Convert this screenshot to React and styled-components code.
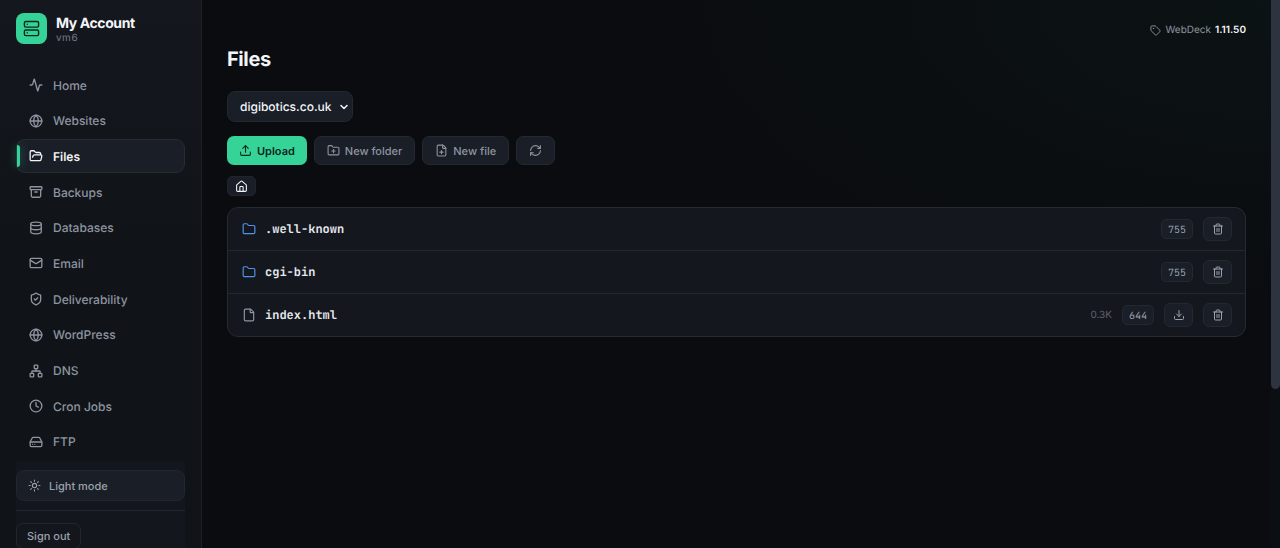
import React from 'react';
import styled, { createGlobalStyle } from 'styled-components';
import {
  Activity, Globe, FolderOpen, Archive, Database, Mail, ShieldCheck, Network, Clock,
  HardDrive, Sun, Upload, FolderPlus, FilePlus, RefreshCw, House, Folder, File,
  Trash2, Download, Tag, Server, ChevronDown,
} from 'lucide-react';

const GlobalStyle = createGlobalStyle`
  *, *::before, *::after { box-sizing: border-box; }
  body {
    margin: 0;
    background: #0a0c10;
    color: #f3f5f8;
    font-family: Inter, "Liberation Sans", sans-serif;
    font-size: 12px;
    text-rendering: geometricPrecision;
  }
  button, select { font: inherit; margin: 0; text-rendering: inherit; }
  button { cursor: pointer; }
  svg { flex: none; display: block; }
`;

const Page = styled.div`
  display: flex;
  height: 100vh;
  overflow: hidden;
  background: radial-gradient(ellipse 600px 300px at 100% 0, #0c1314, #0a0c10);
`;

const Sidebar = styled.aside`
  flex: none;
  display: flex;
  flex-direction: column;
  width: 202px;
  padding: 13px 16px 0;
  border-right: 1px solid #1d2127;
  background: linear-gradient(180deg, #14171e, #101418 50%);
`;

const Brand = styled.div`
  display: flex;
  align-items: center;
  gap: 9px;
  margin-bottom: 24px;
`;

const BrandMark = styled.span`
  display: grid;
  place-items: center;
  width: 31px;
  height: 31px;
  border-radius: 8px;
  background: #36d399;
  color: #08281c;
`;

const BrandName = styled.strong`
  display: block;
  font-size: 14px;
  line-height: 18px;
  font-weight: 700;
  letter-spacing: -0.4px;
`;

const BrandHost = styled.span`
  display: block;
  font-size: 10px;
  line-height: 10px;
  letter-spacing: 0.5px;
  color: #757b87;
`;

const Nav = styled.nav`
  flex: 1;
  display: flex;
  flex-direction: column;
  justify-content: space-between;
`;

const NavItem = styled.a`
  position: relative;
  display: flex;
  align-items: center;
  gap: 10px;
  height: 34px;
  padding: 0 12px;
  border: 1px solid ${(p) => (p.$active ? '#262b34' : 'transparent')};
  border-radius: 9px;
  background: ${(p) => (p.$active ? '#1a1e27' : 'transparent')};
  color: ${(p) => (p.$active ? '#f3f5f8' : '#8e94a0')};
  font-weight: ${(p) => (p.$active ? 600 : 500)};
  text-decoration: none;

  &::before {
    content: '';
    display: ${(p) => (p.$active ? 'block' : 'none')};
    position: absolute;
    left: 0;
    top: 5px;
    bottom: 5px;
    width: 3px;
    border-radius: 0 3px 3px 0;
    background: #36d399;
    box-shadow: 0 0 10px rgba(54, 211, 153, 0.5);
  }
`;

const SidebarFooter = styled.div`
  flex: none;
  height: 87px;
  margin-top: 2px;
  padding-top: 9px;
  background: #13161d;
`;

const ThemeButton = styled.button`
  display: flex;
  align-items: center;
  gap: 8px;
  width: 100%;
  height: 31px;
  padding: 0 11px;
  border: 1px solid #22262f;
  border-radius: 8px;
  background: #1a1e27;
  color: #9ba1ac;
  font-size: 11px;
  font-weight: 500;
`;

const Session = styled.div`
  margin-top: 9px;
  padding-top: 12px;
  border-top: 1px solid #22262d;
`;

const SignOut = styled.button`
  height: 26px;
  padding: 0 10px;
  border: 1px solid #22262f;
  border-radius: 7px;
  background: transparent;
  color: #9ba1ac;
  font-size: 11px;
  font-weight: 500;
`;

const Main = styled.main`
  flex: 1;
  min-width: 0;
  padding: 22px 34px 22px 25px;
`;

const Version = styled.div`
  display: flex;
  align-items: center;
  justify-content: flex-end;
  gap: 4px;
  height: 16px;
  font-size: 10px;
  color: #8e94a0;

  strong { color: #f3f5f8; font-weight: 600; }
`;

const Title = styled.h1`
  margin: 9px 0 20px;
  font-size: 20px;
  line-height: 24px;
  font-weight: 700;
  letter-spacing: -0.4px;
`;

const SelectBox = styled.div`
  display: grid;
  align-items: center;
  width: max-content;
  margin-bottom: 14px;

  & > * { grid-area: 1 / 1; }
  svg { justify-self: end; margin-right: 3px; pointer-events: none; }
`;

const SiteSelect = styled.select`
  appearance: none;
  height: 31px;
  padding: 0 20px 0 12px;
  border: 1px solid #232831;
  border-radius: 8px;
  background: #1a1e27;
  color: #f3f5f8;
  font-weight: 500;
`;

const Toolbar = styled.div`
  display: flex;
  gap: 7px;
  margin-bottom: 11px;
`;

const ToolButton = styled.button`
  display: flex;
  align-items: center;
  gap: 5px;
  height: 29px;
  padding: 0 12px;
  border: ${(p) => (p.$primary ? 'none' : '1px solid #232831')};
  border-radius: 7px;
  background: ${(p) => (p.$primary ? '#36d399' : '#1a1e27')};
  color: ${(p) => (p.$primary ? '#07271b' : '#8e94a0')};
  font-size: 11px;
  font-weight: ${(p) => (p.$primary ? 600 : 500)};
`;

const Crumb = styled.button`
  display: grid;
  place-items: center;
  width: 29px;
  height: 20px;
  margin-bottom: 11px;
  padding: 0;
  border: 1px solid #20242d;
  border-radius: 5px;
  background: #1a1e27;
  color: #f3f5f8;
`;

const FileList = styled.ul`
  margin: 0;
  padding: 0;
  list-style: none;
  border: 1px solid #262a31;
  border-radius: 11px;
  background: #14171e;
`;

const FileRow = styled.li`
  display: flex;
  align-items: center;
  gap: 10px;
  height: 42px;
  padding: 0 13px 0 14px;

  & + & { height: 43px; border-top: 1px solid #23272e; }
`;

const FileName = styled.a`
  flex: 1;
  display: flex;
  align-items: center;
  gap: 9px;
  color: #e6e9ee;
  font-family: "JetBrains Mono", "DejaVu Sans Mono", monospace;
  font-size: 12px;
  font-weight: 600;
  text-decoration: none;

  svg { color: ${(p) => (p.$folder ? '#4f93ea' : '#8e94a0')}; }
`;

const FileSize = styled.span`
  font-size: 10px;
  color: #5d636f;
`;

const Mode = styled.button`
  height: 20px;
  padding: 0 6px;
  border: 1px solid #232831;
  border-radius: 5px;
  background: #1a1e27;
  color: #9ba1ac;
  font-family: "JetBrains Mono", "DejaVu Sans Mono", monospace;
  font-size: 10px;
`;

const IconButton = styled.button`
  display: grid;
  place-items: center;
  width: 29px;
  height: 24px;
  padding: 0;
  border: 1px solid #232831;
  border-radius: 6px;
  background: #1a1e27;
  color: #9ba1ac;
`;

const ScrollTrack = styled.div`
  position: fixed;
  top: 0;
  right: 0;
  bottom: 0;
  width: 9px;
  background: #0b0e12;
`;

const ScrollThumb = styled.div`
  height: 71%;
  border-radius: 0 0 5px 5px;
  background: #2d333f;
`;

const NAV = [
  ['Home', Activity], ['Websites', Globe], ['Files', FolderOpen], ['Backups', Archive],
  ['Databases', Database], ['Email', Mail], ['Deliverability', ShieldCheck],
  ['WordPress', Globe], ['DNS', Network], ['Cron Jobs', Clock], ['FTP', HardDrive],
];

const FILES = [
  { name: '.well-known', folder: true, mode: '755' },
  { name: 'cgi-bin', folder: true, mode: '755' },
  { name: 'index.html', folder: false, mode: '644', size: '0.3K' },
];

export default function App() {
  return (
    <Page>
      <GlobalStyle />
      <Sidebar>
        <Brand>
          <BrandMark><Server size={17} /></BrandMark>
          <div>
            <BrandName>My Account</BrandName>
            <BrandHost>vm6</BrandHost>
          </div>
        </Brand>
        <Nav aria-label="Main">
          {NAV.map(([label, Icon]) => (
            <NavItem key={label} href="#" $active={label === 'Files'} aria-current={label === 'Files' ? 'page' : undefined}>
              <Icon size={14} strokeWidth={2.25} />
              {label}
            </NavItem>
          ))}
        </Nav>
        <SidebarFooter>
          <ThemeButton><Sun size={13} />Light mode</ThemeButton>
          <Session><SignOut>Sign out</SignOut></Session>
        </SidebarFooter>
      </Sidebar>
      <Main>
        <Version><Tag size={11} />WebDeck <strong>1.11.50</strong></Version>
        <Title>Files</Title>
        <SelectBox>
          <SiteSelect aria-label="Website"><option>digibotics.co.uk</option></SiteSelect>
          <ChevronDown size={12} strokeWidth={3} />
        </SelectBox>
        <Toolbar>
          <ToolButton $primary><Upload size={13} />Upload</ToolButton>
          <ToolButton><FolderPlus size={13} />New folder</ToolButton>
          <ToolButton><FilePlus size={13} />New file</ToolButton>
          <ToolButton aria-label="Refresh"><RefreshCw size={13} /></ToolButton>
        </Toolbar>
        <Crumb aria-label="Root folder"><House size={13} /></Crumb>
        <FileList>
          {FILES.map((f) => (
            <FileRow key={f.name}>
              <FileName href="#" $folder={f.folder}>
                {f.folder ? <Folder size={14} /> : <File size={14} />}
                {f.name}
              </FileName>
              {f.size && <FileSize>{f.size}</FileSize>}
              <Mode>{f.mode}</Mode>
              {!f.folder && <IconButton aria-label={`Download ${f.name}`}><Download size={12} /></IconButton>}
              <IconButton aria-label={`Delete ${f.name}`}><Trash2 size={12} /></IconButton>
            </FileRow>
          ))}
        </FileList>
      </Main>
      <ScrollTrack aria-hidden="true"><ScrollThumb /></ScrollTrack>
    </Page>
  );
}
